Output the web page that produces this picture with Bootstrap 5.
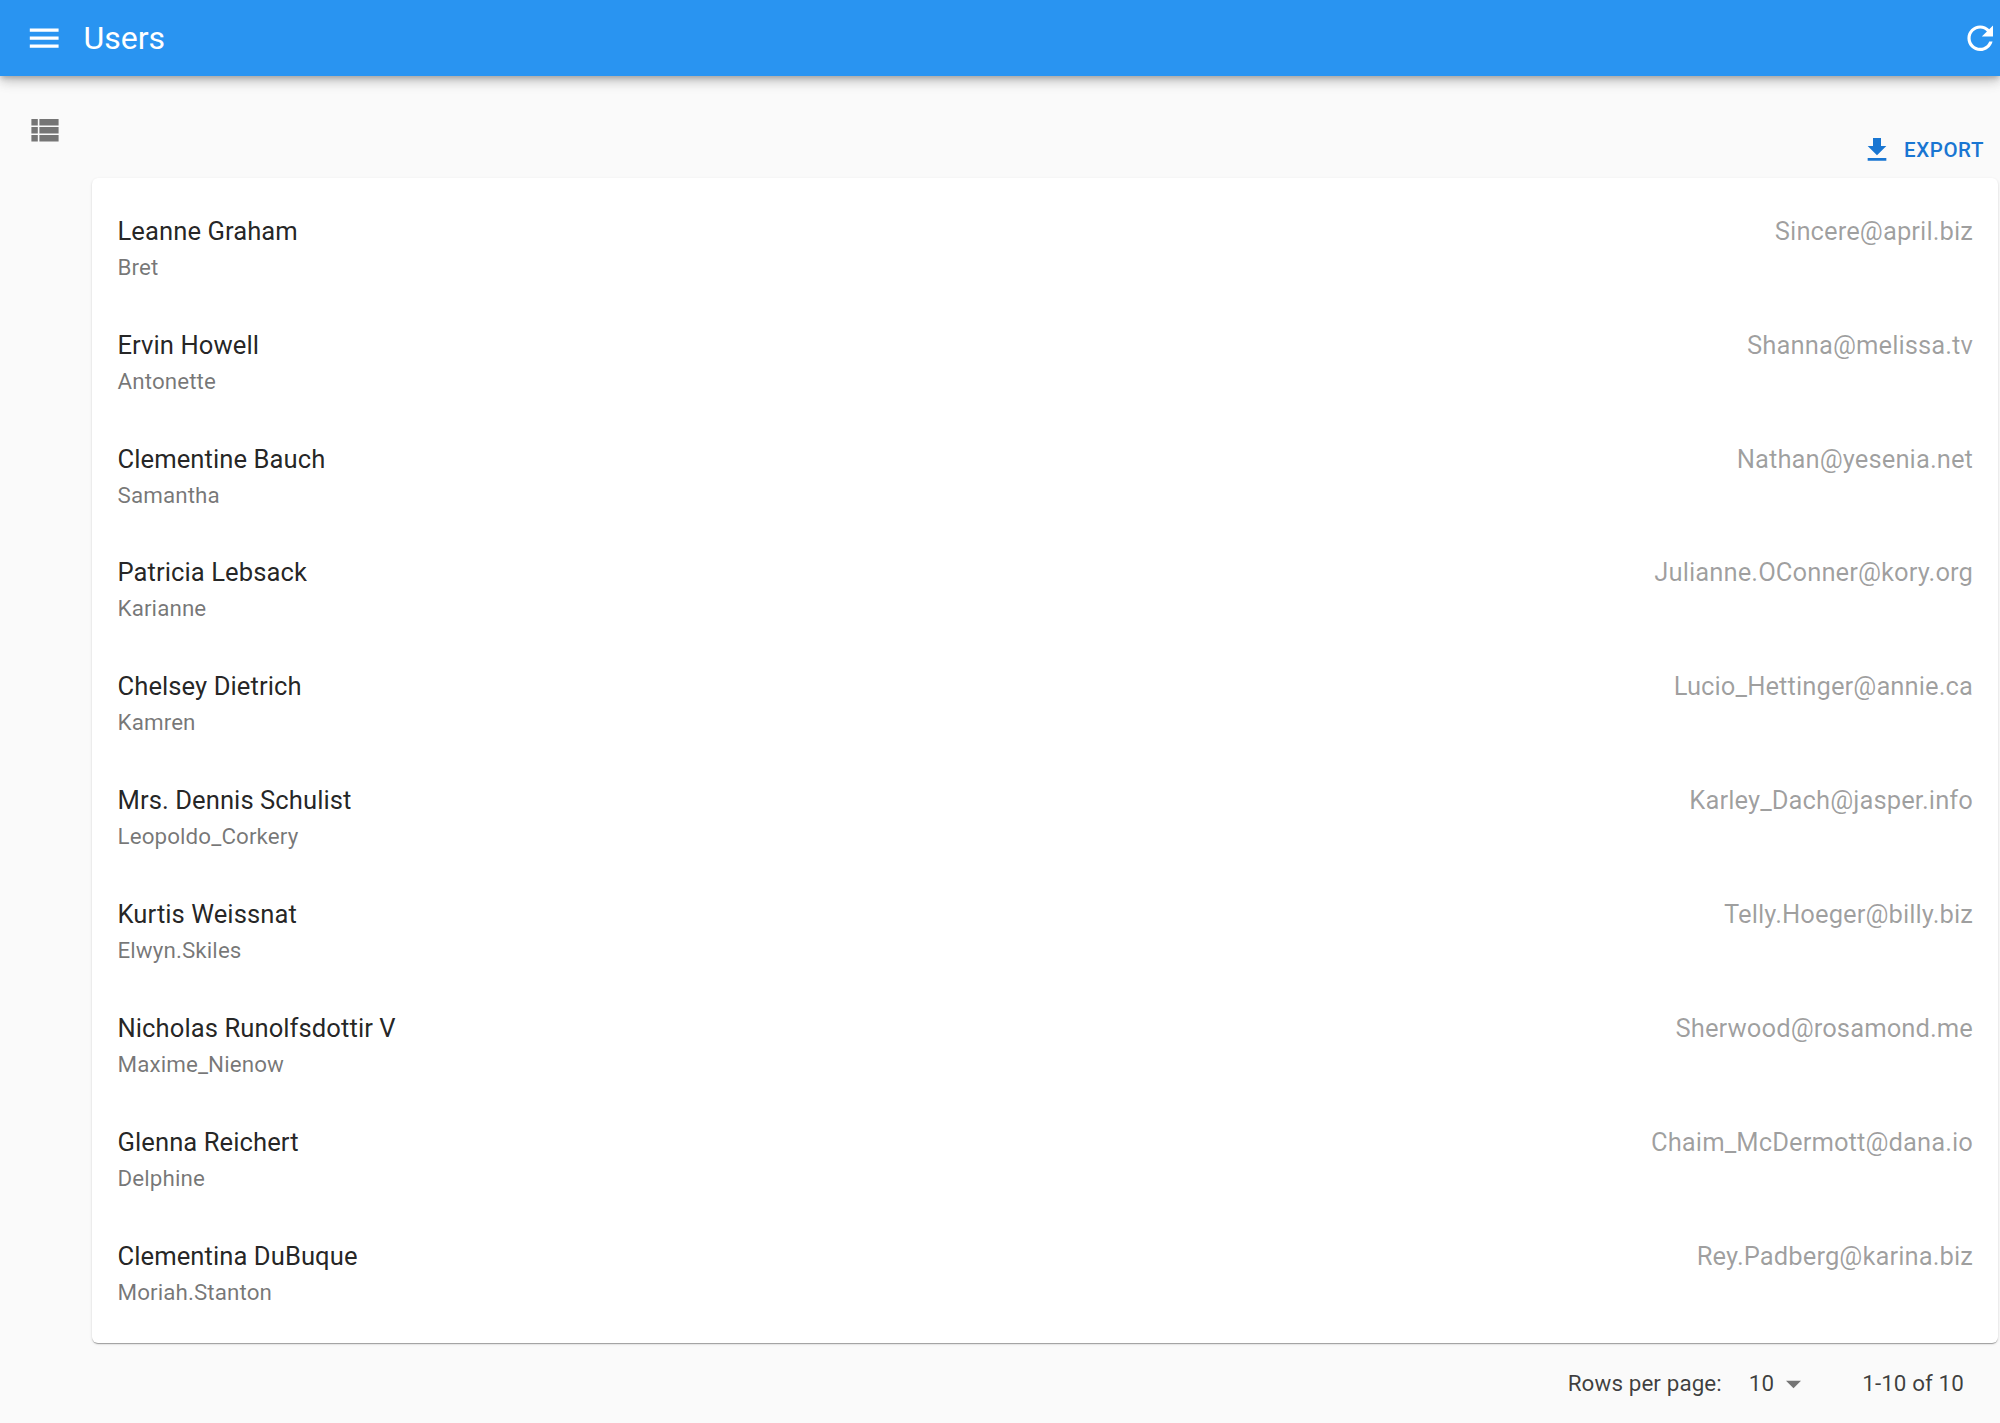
<!DOCTYPE html>
<html lang="en">
<head>
<meta charset="utf-8">
<title>Users</title>
<link rel="stylesheet" href="https://cdn.jsdelivr.net/npm/bootstrap@5.3.0/dist/css/bootstrap.min.css">
<style>
html,body{height:100%}
body{background:#fafafa;font-family:Roboto,"Liberation Sans",sans-serif;color:rgba(0,0,0,.87);overflow:hidden}
.top-bar{height:76px;background:#2994f1;color:#fff;box-shadow:0 3px 5px -1px rgba(0,0,0,.2),0 6px 10px 0 rgba(0,0,0,.14),0 1px 18px 0 rgba(0,0,0,.12);padding-left:25px;position:relative;z-index:2}
.top-title{font-size:32px;margin-left:20px;font-weight:400;line-height:1}
.ic-lg{width:38.4px;height:38.4px;fill:currentColor;flex:none}
.ic-refresh{margin-right:1px}
.side-col{width:92px;flex:none;padding:35px 0 0 25px;color:#757575}
.tool-row{height:102px;padding-right:16px}
.export-btn{color:#1976d2;font-size:20.5px;font-weight:500;letter-spacing:.02857em;margin-bottom:12px;line-height:1.2}
.export-btn svg{width:32px;height:32px;fill:currentColor;margin-right:11.5px}
.user-sheet{background:#fff;border-radius:6px;box-shadow:0 2px 1px -1px rgba(0,0,0,.2),0 1px 1px 0 rgba(0,0,0,.14),0 1px 3px 0 rgba(0,0,0,.12);padding:12.8px 0;margin-right:2px}
.user-row{height:113.9px;padding:24px 25px 0 25.5px}
.user-name{font-size:25.6px;line-height:32px;letter-spacing:.07px}
.user-sub{font-size:22.4px;line-height:26px;margin-top:7px;color:rgba(0,0,0,.54);letter-spacing:.1px}
.user-mail{font-size:25.6px;line-height:32px;color:rgba(0,0,0,.38);letter-spacing:.07px}
.pager-row{height:83px;padding-right:36px;font-size:22.4px;color:rgba(0,0,0,.75);letter-spacing:.1px}
.pager-val{margin-left:27px}
.pager-arrow{width:15px;height:9px;fill:#757575;margin-left:12px;margin-right:61px}
</style>
</head>
<body>
<header class="top-bar d-flex align-items-center">
  <svg class="ic-lg" viewBox="0 0 24 24"><path d="M3 18h18v-2H3v2zm0-5h18v-2H3v2zm0-7v2h18V6H3z"/></svg>
  <div class="top-title flex-grow-1">Users</div>
  <svg class="ic-lg ic-refresh" viewBox="0 0 24 24"><path d="M17.65 6.35C16.2 4.9 14.21 4 12 4c-4.42 0-7.99 3.58-7.99 8s3.57 8 7.99 8c3.73 0 6.84-2.55 7.73-6h-2.08c-.82 2.33-3.04 4-5.65 4-3.31 0-6-2.69-6-6s2.69-6 6-6c1.66 0 3.14.69 4.22 1.78L13 11h7V4l-2.35 2.35z"/></svg>
</header>
<div class="d-flex">
  <aside class="side-col">
    <svg class="ic-lg" viewBox="0 0 24 24"><path d="M4 14h4v-4H4v4zm0 5h4v-4H4v4zM4 9h4V5H4v4zm5 5h12v-4H9v4zm0 5h12v-4H9v4zM9 5v4h12V5H9z"/></svg>
  </aside>
  <main class="flex-grow-1">
    <div class="tool-row d-flex justify-content-end align-items-end">
      <div class="export-btn d-flex align-items-center">
        <svg viewBox="0 0 24 24"><path d="M19 9h-4V3H9v6H5l7 7 7-7zM5 18v2h14v-2H5z"/></svg>
        <span>EXPORT</span>
      </div>
    </div>
    <div class="user-sheet">
      <div class="user-row d-flex justify-content-between"><div><div class="user-name">Leanne Graham</div><div class="user-sub">Bret</div></div><div class="user-mail">Sincere@april.biz</div></div>
      <div class="user-row d-flex justify-content-between"><div><div class="user-name">Ervin Howell</div><div class="user-sub">Antonette</div></div><div class="user-mail">Shanna@melissa.tv</div></div>
      <div class="user-row d-flex justify-content-between"><div><div class="user-name">Clementine Bauch</div><div class="user-sub">Samantha</div></div><div class="user-mail">Nathan@yesenia.net</div></div>
      <div class="user-row d-flex justify-content-between"><div><div class="user-name">Patricia Lebsack</div><div class="user-sub">Karianne</div></div><div class="user-mail">Julianne.OConner@kory.org</div></div>
      <div class="user-row d-flex justify-content-between"><div><div class="user-name">Chelsey Dietrich</div><div class="user-sub">Kamren</div></div><div class="user-mail">Lucio_Hettinger@annie.ca</div></div>
      <div class="user-row d-flex justify-content-between"><div><div class="user-name">Mrs. Dennis Schulist</div><div class="user-sub">Leopoldo_Corkery</div></div><div class="user-mail">Karley_Dach@jasper.info</div></div>
      <div class="user-row d-flex justify-content-between"><div><div class="user-name">Kurtis Weissnat</div><div class="user-sub">Elwyn.Skiles</div></div><div class="user-mail">Telly.Hoeger@billy.biz</div></div>
      <div class="user-row d-flex justify-content-between"><div><div class="user-name">Nicholas Runolfsdottir V</div><div class="user-sub">Maxime_Nienow</div></div><div class="user-mail">Sherwood@rosamond.me</div></div>
      <div class="user-row d-flex justify-content-between"><div><div class="user-name">Glenna Reichert</div><div class="user-sub">Delphine</div></div><div class="user-mail">Chaim_McDermott@dana.io</div></div>
      <div class="user-row d-flex justify-content-between"><div><div class="user-name">Clementina DuBuque</div><div class="user-sub">Moriah.Stanton</div></div><div class="user-mail">Rey.Padberg@karina.biz</div></div>
    </div>
    <div class="pager-row d-flex justify-content-end align-items-center">
      <span>Rows per page:</span>
      <span class="pager-val">10</span>
      <svg class="pager-arrow" viewBox="0 0 10 5"><path d="M0 0l5 5 5-5z"/></svg>
      <span>1-10 of 10</span>
    </div>
  </main>
</div>
</body>
</html>
